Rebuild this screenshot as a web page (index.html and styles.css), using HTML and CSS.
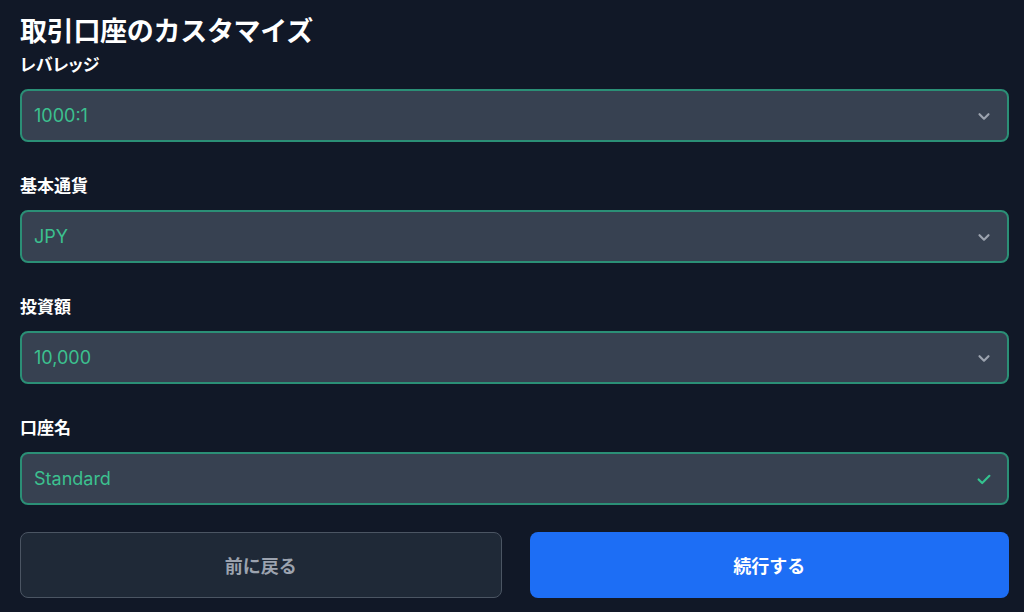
FILE: index.html
```html
<!DOCTYPE html>
<html lang="ja">
<head>
    <meta charset="UTF-8">
    <meta name="viewport" content="width=device-width, initial-scale=1.0">
    <title>取引口座のカスタマイズ</title>
    <link rel="stylesheet" href="styles.css">
</head>
<body>
    <div class="container">
        <h2>取引口座のカスタマイズ</h2>

        <div class="field">
            <label>レバレッジ</label>
            <div class="box">
                <span class="value">1000:1</span>
                <svg class="chevron" viewBox="0 0 20 20" width="18" height="18"><path d="M5 8l5 5 5-5" fill="none" stroke="currentColor" stroke-width="2.4" stroke-linecap="round" stroke-linejoin="round"/></svg>
            </div>
        </div>

        <div class="field">
            <label>基本通貨</label>
            <div class="box">
                <span class="value">JPY</span>
                <svg class="chevron" viewBox="0 0 20 20" width="18" height="18"><path d="M5 8l5 5 5-5" fill="none" stroke="currentColor" stroke-width="2.4" stroke-linecap="round" stroke-linejoin="round"/></svg>
            </div>
        </div>

        <div class="field">
            <label>投資額</label>
            <div class="box">
                <span class="value">10,000</span>
                <svg class="chevron" viewBox="0 0 20 20" width="18" height="18"><path d="M5 8l5 5 5-5" fill="none" stroke="currentColor" stroke-width="2.4" stroke-linecap="round" stroke-linejoin="round"/></svg>
            </div>
        </div>

        <div class="field last">
            <label>口座名</label>
            <div class="box">
                <span class="value">Standard</span>
                <svg class="check" viewBox="0 0 20 20" width="18" height="18"><path d="M4 10.5l4 4 8-8" fill="none" stroke="currentColor" stroke-width="2.4" stroke-linecap="round" stroke-linejoin="round"/></svg>
            </div>
        </div>

        <div class="buttons">
            <button class="back">前に戻る</button>
            <button class="next">続行する</button>
        </div>
    </div>
</body>
</html>
```

FILE: styles.css
```css
* {
    margin: 0;
    padding: 0;
    box-sizing: border-box;
    font-family: Inter, "Noto Sans CJK JP", sans-serif;
}
body {
    background: #111827;
    width: 1024px;
    height: 612px;
    overflow: hidden;
}
.container {
    padding: 14px 15px 0 20px;
}
h2 {
    color: #fff;
    font-size: 27px;
    font-weight: 700;
    line-height: 36px;
    margin-bottom: 3px;
    letter-spacing: -0.3px;
}
.field {
    margin-bottom: 32px;
}
.field.last {
    margin-bottom: 27px;
}
label {
    display: block;
    color: #fff;
    font-size: 17px;
    font-weight: 700;
    line-height: 24px;
    margin-bottom: 12px;
    font-feature-settings: "palt";
}
.box {
    height: 53px;
    background: #374151;
    border: 2px solid #2b8f76;
    border-radius: 8px;
    display: flex;
    align-items: center;
    justify-content: space-between;
    padding: 0 14px 0 12px;
}
.value {
    color: #3cc08f;
    font-size: 18px;
}
.chevron {
    color: #9ca3af;
}
.check {
    color: #34c38f;
}
.buttons {
    display: flex;
    gap: 28px;
}
button {
    flex: 1;
    height: 66px;
    border-radius: 8px;
    font-size: 18px;
    font-weight: 700;
    cursor: pointer;
}
.back {
    background: #1f2937;
    border: 1.5px solid #4b5563;
    color: #9ca3af;
}
.next {
    background: #1d6ef5;
    border: none;
    color: #fff;
}
```
